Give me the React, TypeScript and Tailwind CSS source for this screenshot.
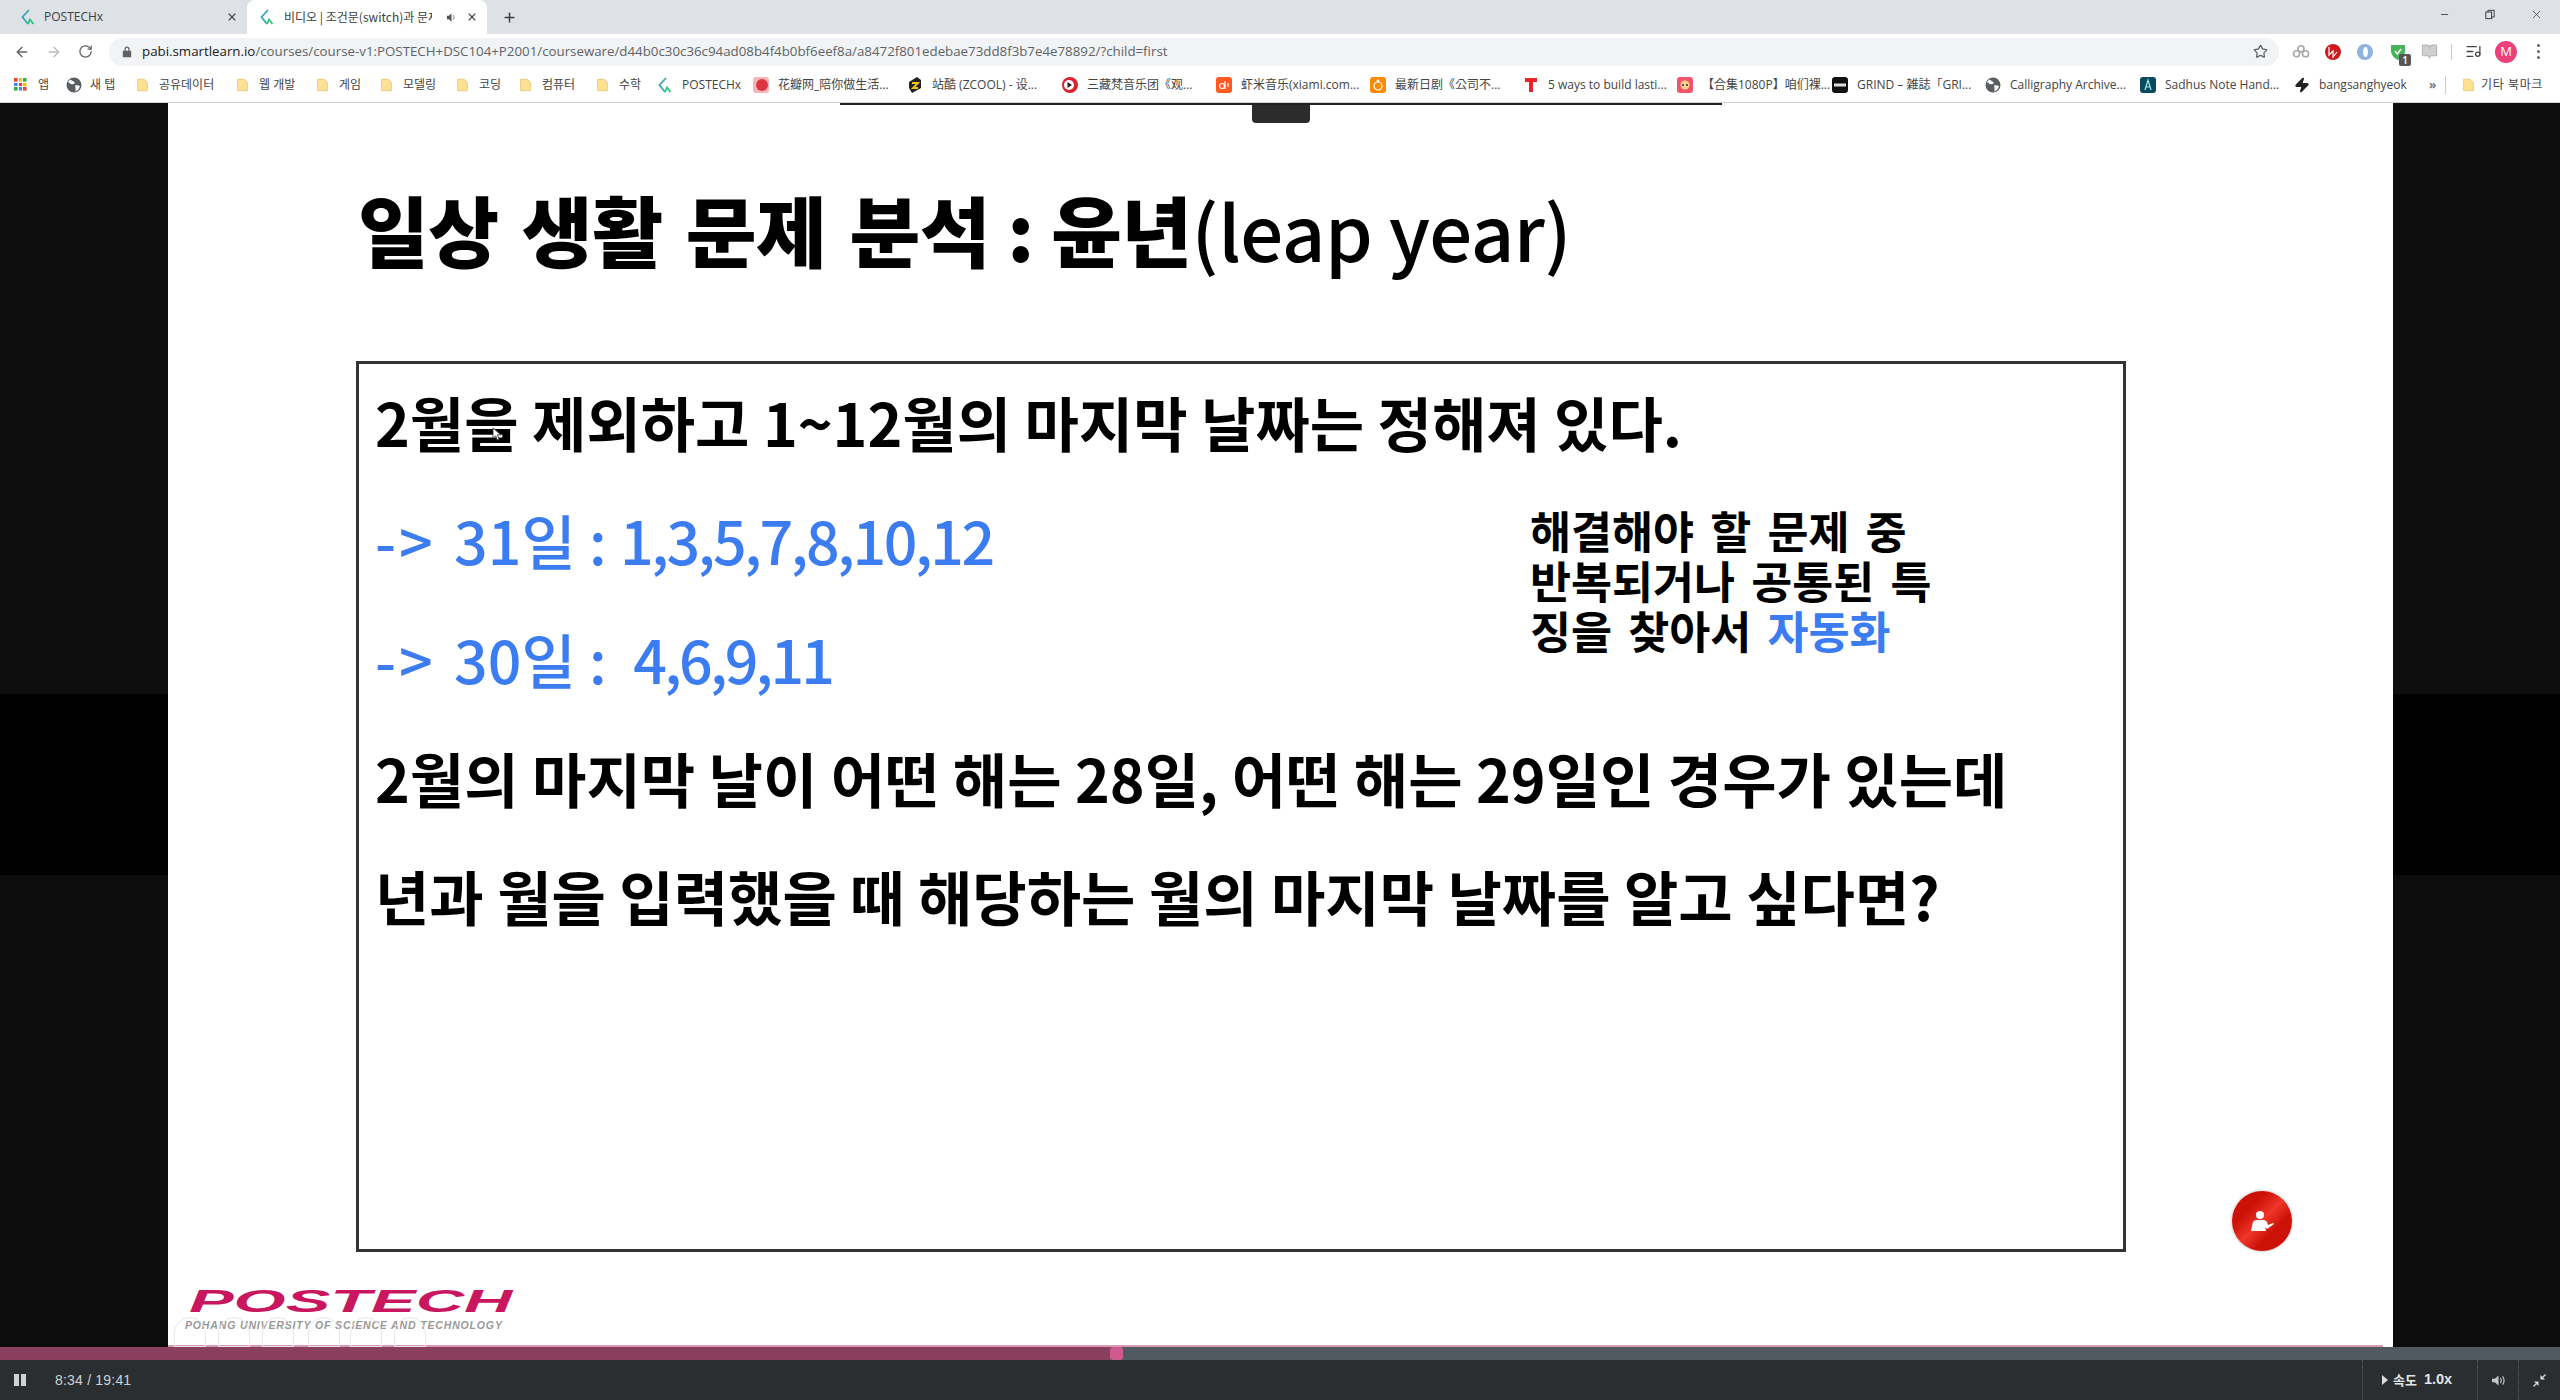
import React from "react";
import { ArrowLeft, ArrowRight, RotateCw, Star, Plus, X, Minus, ListMusic, BookOpen, Zap } from "lucide-react";

const ui = "font-['Open_Sans','Noto_Sans_CJK_KR',sans-serif]";
const slideFont = "font-['Noto_Sans_CJK_KR','Liberation_Sans',sans-serif]";

function Favicon({ className = "" }: { className?: string }) {
  return (
    <svg viewBox="0 0 16 16" className={"w-[16px] h-[16px] shrink-0 " + className} fill="none" strokeWidth="1.8">
      <path d="M9 1 L2.5 8 L8 15" stroke="#3aa6b5" />
      <path d="M8 15 L10 10.5 L13.5 15" stroke="#2bc47d" />
    </svg>
  );
}

function Folder() {
  return (
    <svg viewBox="0 0 12 16" className="w-[11px] h-[14px] shrink-0">
      <path d="M0.5 1.5 H8 L11.5 5 V14.5 H0.5 Z" fill="#fde293" stroke="#e6c66e" strokeWidth="1" />
    </svg>
  );
}

function Apps() {
  const c = ["#ea4335", "#fbbc05", "#34a853", "#4285f4", "#ea4335", "#fbbc05", "#34a853", "#4285f4", "#ea4335"];
  return (
    <div className="grid grid-cols-3 gap-[1px] w-[13px] h-[13px] shrink-0">
      {c.map((x, i) => (
        <svg key={i} viewBox="0 0 3 3" className="w-[3.6px] h-[3.6px]"><rect width="3" height="3" fill={x} /></svg>
      ))}
    </div>
  );
}

const DarkGlobe = () => (
  <svg viewBox="0 0 16 16" className="w-[16px] h-[16px] shrink-0">
    <circle cx="8" cy="8" r="7.5" fill="#5a5e63" />
    <path d="M4 2.5 Q8 4 9 6 Q7 8 5 7 Q3 6 2 5 Z M9 8.5 Q12 8 14 9 Q13 13 9.5 14.5 Q10 11 9 8.5 Z" fill="#fff" />
  </svg>
);

const Dot = ({ bg, children }: { bg: string; children?: React.ReactNode }) => (
  <svg viewBox="0 0 16 16" className="w-[16px] h-[16px] shrink-0">
    <rect width="16" height="16" rx="3" fill={bg} />
    {children}
  </svg>
);

const folders: [string, string][] = [
  ["공유데이터", "w-[100px]"],
  ["웹 개발", "w-[80px]"],
  ["게임", "w-[64px]"],
  ["모델링", "w-[76px]"],
  ["코딩", "w-[63px]"],
  ["컴퓨터", "w-[77px]"],
  ["수학", "w-[60px]"],
];

const sites: [React.ReactNode, string, string][] = [
  [<Favicon />, "POSTECHx", "w-[96px]"],
  [<Dot bg="#f4b6b6"><circle cx="9" cy="8" r="6" fill="#dc3545" /></Dot>, "花瓣网_陪你做生活...", "w-[154px]"],
  [<svg viewBox="0 0 16 16" className="w-[16px] h-[16px] shrink-0"><path d="M10 0 L14 3 V11 L5 16 L2 11 V5 Z" fill="#222" /><path d="M5 6 H11 L6 11 H11" stroke="#f5c518" strokeWidth="1.8" fill="none" /></svg>, "站酷 (ZCOOL) - 设...", "w-[155px]"],
  [<svg viewBox="0 0 16 16" className="w-[16px] h-[16px] shrink-0"><circle cx="8" cy="8" r="8" fill="#d9232d" /><circle cx="7" cy="8" r="5" fill="#fff" /><path d="M5.5 5 L10 8 L5.5 11 Z" fill="#222" /></svg>, "三藏梵音乐团《观...", "w-[154px]"],
  [<Dot bg="#ff5a1f"><circle cx="6" cy="9" r="2.5" fill="none" stroke="#fff" strokeWidth="1.2" /><path d="M9 4 V12 M12 6 V10" stroke="#fff" strokeWidth="1.2" /></Dot>, "虾米音乐(xiami.com...", "w-[154px]"],
  [<Dot bg="#ff8a00"><circle cx="8" cy="9" r="4" fill="none" stroke="#fff" strokeWidth="1.2" /><circle cx="8" cy="4" r="1.4" fill="#fff" /></Dot>, "最新日剧《公司不...", "w-[153px]"],
  [<svg viewBox="0 0 16 16" className="w-[16px] h-[16px] shrink-0"><path d="M2 1 H14 V5 H10 V15 H6 V5 H2 Z" fill="#e8262a" /></svg>, "5 ways to build lasti...", "w-[154px]"],
  [<Dot bg="#f0556b"><circle cx="8" cy="8" r="4.5" fill="#fbd38d" /><circle cx="6" cy="8" r="1" fill="#333" /><circle cx="10" cy="8" r="1" fill="#333" /></Dot>, "【合集1080P】咱们裸...", "w-[155px]"],
  [<Dot bg="#111"><rect x="2" y="6.5" width="12" height="3" fill="#ddd" /></Dot>, "GRIND – 雑誌「GRI...", "w-[153px]"],
  [<DarkGlobe />, "Calligraphy Archive...", "w-[155px]"],
  [<Dot bg="#0b4a5e"><path d="M5 13 L8 3 L11 13 M6.2 10 H9.8" stroke="#9ee" strokeWidth="1.2" fill="none" /></Dot>, "Sadhus Note Hand...", "w-[154px]"],
  [<Zap size={16} className="shrink-0" fill="#222" stroke="#222" />, "bangsanghyeok", "w-[135px]"],
];

function Chrome() {
  return (
    <div className={ui + " shrink-0"}>
      <div className="h-[34px] bg-[#dee1e6] flex items-end relative">
        <div className="w-[247px] h-[34px] flex items-center pl-[20px] text-[12px] text-[#3c4043]">
          <Favicon />
          <span className="ml-[8px] flex-1">POSTECHx</span>
          <X size={12} className="mr-[9px] text-[#444]" strokeWidth={2.2} />
        </div>
        <div className="w-[240px] h-[34px] bg-white rounded-t-[8px] flex items-center pl-[12px] text-[12px] text-[#3c4043]">
          <Favicon />
          <span className="ml-[9px] w-[148px] overflow-hidden whitespace-nowrap font-['Noto_Sans_CJK_KR','Open_Sans',sans-serif]">비디오 | 조건문(switch)과 문제</span>
          <svg viewBox="0 0 12 12" className="w-[11px] h-[11px] ml-[14px]"><path d="M1 4 H3 L6 1.5 V10.5 L3 8 H1 Z" fill="#555" /><path d="M8 3.5 Q10 6 8 8.5" stroke="#777" fill="none" /></svg>
          <X size={12} className="ml-[9px] text-[#444]" strokeWidth={2.2} />
        </div>
        <div className="h-[34px] flex items-center ml-[15px]"><Plus size={15} strokeWidth={2.4} className="text-[#3c4043]" /></div>
        <div className="ml-auto h-[28px] self-start flex items-center pr-[17px] gap-[35px] text-[#222]">
          <Minus size={11} strokeWidth={1.6} />
          <svg viewBox="0 0 12 12" className="w-[10px] h-[11px]" fill="none" stroke="#222" strokeWidth="1"><rect x="1" y="3" width="7" height="8" /><path d="M3.5 3 V1 H11 V9 H8" /></svg>
          <X size={13} strokeWidth={1.2} />
        </div>
      </div>

      <div className="h-[35px] bg-white flex items-center">
        <div className="w-[109px] flex items-center pl-[14px] gap-[16px] text-[#5f6368] shrink-0">
          <ArrowLeft size={16} strokeWidth={2} />
          <ArrowRight size={16} strokeWidth={2} className="text-[#bbb]" />
          <RotateCw size={15} strokeWidth={2} />
        </div>
        <div className="w-[2170px] h-[28px] bg-[#f1f3f4] rounded-full flex items-center pl-[13px] pr-[11px] shrink-0">
          <svg viewBox="0 0 12 14" className="w-[10px] h-[13px] text-[#5f6368]" fill="currentColor"><path d="M3 6 V4 a3 3 0 0 1 6 0 V6 H11 V14 H1 V6 Z M4.5 6 H7.5 V4 a1.5 1.5 0 0 0 -3 0 Z" fillRule="evenodd" /></svg>
          <div className="ml-[10px] text-[13.3px] whitespace-nowrap text-[#5f6368] flex-1">
            <span className="text-[#202124]">pabi.smartlearn.io</span>/courses/course-v1:POSTECH+DSC104+P2001/courseware/d44b0c30c36c94ad08b4f4b0bf6eef8a/a8472f801edebae73dd8f3b7e4e78892/?child=first
          </div>
          <Star size={15} className="text-[#5f6368]" strokeWidth={2} />
        </div>
        <div className="flex items-center relative flex-1 h-full">
          <svg viewBox="0 0 20 16" className="w-[18px] h-[15px] ml-[13px]" fill="none" stroke="#a8a8a8" strokeWidth="1.8"><circle cx="10" cy="5" r="3.4" /><circle cx="5" cy="10.5" r="3.4" /><circle cx="15" cy="10.5" r="3.4" /></svg>
          <svg viewBox="0 0 16 16" className="w-[16px] h-[16px] ml-[15px]"><circle cx="8" cy="8" r="8" fill="#cc1a1d" /><path d="M4 3 V11 L8 7 V13 L12 8" stroke="#fff" strokeWidth="1.2" fill="none" /></svg>
          <svg viewBox="0 0 16 16" className="w-[16px] h-[16px] ml-[16px]"><circle cx="8" cy="8" r="8" fill="#8fb3de" /><ellipse cx="8.5" cy="8" rx="2.4" ry="5" fill="#fff" /></svg>
          <div className="relative ml-[17px] w-[16px] h-[16px]">
            <svg viewBox="0 0 16 16" className="w-[16px] h-[16px]"><path d="M1 1 H15 V8 Q14 13 8 16 Q2 13 1 8 Z" fill="#48b35a" /><path d="M5 7 L7.5 10 L11 5" stroke="#fff" strokeWidth="1.4" fill="none" /></svg>
            <div className="absolute left-[9px] top-[10px] w-[12px] h-[12px] bg-[#555] rounded-[2px] text-white text-[10px] leading-[12px] text-center font-semibold">1</div>
          </div>
          <BookOpen size={17} className="ml-[15px] text-[#b5b5b5]" fill="#cfcfcf" strokeWidth={1.6} />
          <div className="w-px h-[16px] bg-[#ccc] ml-[13px]" />
          <ListMusic size={17} className="ml-[13px] text-[#444]" strokeWidth={1.8} />
          <div className="w-[22px] h-[22px] rounded-full bg-[#ec407a] text-white text-[13px] flex items-center justify-center ml-[13px]">M</div>
          <div className="flex flex-col gap-[3px] ml-[20px]">
            <div className="w-[3px] h-[3px] rounded-full bg-[#5f6368]" />
            <div className="w-[3px] h-[3px] rounded-full bg-[#5f6368]" />
            <div className="w-[3px] h-[3px] rounded-full bg-[#5f6368]" />
          </div>
        </div>
      </div>

      <div className="h-[34px] bg-white border-b border-[#cfd1d4] flex items-center pl-[14px] pb-[2px] text-[12px] text-[#444] whitespace-nowrap">
        <div className="w-[52px] flex items-center gap-[11px] shrink-0"><Apps /><span>앱</span></div>
        <div className="w-[71px] flex items-center gap-[8px] shrink-0"><DarkGlobe /><span>새 탭</span></div>
        {folders.map(([t, w]) => (
          <div key={t} className={w + " flex items-center gap-[11px] shrink-0"}><Folder /><span>{t}</span></div>
        ))}
        {sites.map(([ic, t, w]) => (
          <div key={t} className={w + " flex items-center gap-[9px] shrink-0 overflow-hidden"}>{ic}<span>{t}</span></div>
        ))}
        <span className="w-[16px] font-bold text-[#777] shrink-0">»</span>
        <div className="w-px h-[18px] bg-[#ccc] shrink-0" />
        <div className="flex items-center gap-[7px] ml-[17px] shrink-0"><Folder /><span className="tracking-[0.6px]">기타 북마크</span></div>
      </div>
    </div>
  );
}

function SideBar({ width }: { width: string }) {
  return (
    <div className={width + " flex flex-col shrink-0"}>
      <div className="h-[591px] bg-[#0e0e0e]" />
      <div className="h-[181px] bg-black" />
      <div className="flex-1 bg-[#0c0c0c]" />
    </div>
  );
}

function Slide() {
  const centers = ["left-[6px]", "left-[50px]", "left-[94px]", "left-[140px]", "left-[182px]", "left-[226px]"];
  return (
    <div className={"flex-1 bg-white relative overflow-hidden flex flex-col " + slideFont}>
      <div className="w-[882px] h-[2px] bg-[#222] mx-auto shrink-0" />
      <div className="w-[58px] h-[18px] bg-[#2c2c2c] rounded-b-[4px] mx-auto shrink-0" />

      <div className="mt-[66px] ml-[190px] h-[80px] leading-[80px] text-[77px] font-black text-black tracking-[-0.5px] [word-spacing:6px] whitespace-nowrap shrink-0">
        일상 생활 문제 분석<span className="[word-spacing:0px]"> : </span>윤년<span className="font-medium text-[76px] [word-spacing:0px]">(leap year)</span>
      </div>

      <div className="mt-[92px] ml-[188px] w-[1770px] h-[891px] border-[3px] border-[#333] pt-px pl-[16px] text-[59.1px] font-bold text-black whitespace-nowrap shrink-0">
        <div className="h-[118px] leading-[112px]">2월을 제외하고 1~12월의 마지막 날짜는 정해져 있다.</div>
        <div className="flex">
          <div className="w-[1155px] text-[#3b7cf0] font-medium">
            <div className="h-[119px] leading-[112px]"><span className="tracking-[3px] mr-[5px]">-&gt;</span> 31일 : <span className="tracking-[-2.4px]">1,3,5,7,8,10,12</span></div>
            <div className="h-[119px] leading-[112px]"><span className="tracking-[3px] mr-[5px]">-&gt;</span> 30일 :&nbsp; <span className="tracking-[-2.8px]">4,6,9,11</span></div>
          </div>
          <div className="mt-[22px] text-[44.6px] leading-[50px] font-bold [word-spacing:6px]">
            <div>해결해야 할 문제 중</div>
            <div>반복되거나 공통된 특</div>
            <div>징을 찾아서 <span className="text-[#3b7cf0]">자동화</span></div>
          </div>
        </div>
        <div className="h-[118px] leading-[112px]">2월의 마지막 날이 어떤 해는 28일, 어떤 해는 29일인 경우가 있는데</div>
        <div className="h-[118px] leading-[112px]">년과 월을 입력했을 때 해당하는 월의 마지막 날짜를 알고 싶다면?</div>
      </div>

      <div className="mt-[33px] ml-[21px] h-[32px] leading-[32px] text-[32px] font-['Liberation_Sans',sans-serif] font-bold italic text-[#c9175f] scale-x-[2.09] origin-left whitespace-nowrap shrink-0">POSTECH</div>
      <div className="mt-[1px] ml-[17px] text-[10.5px] leading-[14px] font-['Liberation_Sans',sans-serif] italic font-bold text-[#999] tracking-[0.85px] whitespace-nowrap shrink-0">POHANG UNIVERSITY OF SCIENCE AND TECHNOLOGY</div>

      <div className="absolute left-0 bottom-0 w-[2215px] h-[2px] bg-[#d89ab4]" />
      {centers.map((c) => (
        <div key={c} className={"absolute bottom-0 top-[1214px] w-[32px] rounded-t-full border border-[#e8e8e8] " + c} />
      ))}

      <svg viewBox="0 0 10 16" className="absolute left-[324px] top-[324px] w-[9px] h-[14px]"><path d="M1 1 V13 L4 10 L6 15 L8 14 L6 9 L10 9 Z" fill="#fff" stroke="#333" strokeWidth="1" /></svg>

      <div className="absolute left-[2064px] top-[1088px] w-[60px] h-[60px] rounded-full bg-[linear-gradient(135deg,#cc1206_30%,#f0352a_50%,#cc1206_68%)] flex items-center justify-center shadow-[0_0_3px_rgba(0,0,0,0.35)]">
        <svg viewBox="0 0 26 22" className="w-[26px] h-[22px]" fill="#fff"><circle cx="11" cy="5" r="4" /><path d="M2 21 L4 12 Q5 10 8 10 H14 Q17 10 18 12 L19 15 L24 13 L25 14 L18 19 L16 17 L17 21 Z" /></svg>
      </div>
    </div>
  );
}

function Player() {
  return (
    <div className="shrink-0 font-['Liberation_Sans','Noto_Sans_CJK_KR',sans-serif]">
      <div className="h-[13px] bg-[#505a60] relative">
        <div className="h-full w-[1110px] bg-[#8b3f5f]" />
        <div className="absolute left-[1110px] top-0 w-[13px] h-[13px] rounded-[3px] bg-[#ce5a8f]" />
      </div>
      <div className="h-[40px] bg-[#2a2e31] flex items-center text-[#cfd2d4]">
        <div className="ml-[14px] flex gap-[2px]">
          <div className="w-[5px] h-[12px] bg-[#cfd2d4]" />
          <div className="w-[5px] h-[12px] bg-[#cfd2d4]" />
        </div>
        <div className="ml-[29px] text-[14px] tracking-[0.2px]">8:34 / 19:41</div>
        <div className="ml-auto h-full w-[115px] border-l border-dotted border-[#5a5f63] flex items-center pl-[19px]">
          <svg viewBox="0 0 6 10" className="w-[6px] h-[10px]"><path d="M0 0 L6 5 L0 10 Z" fill="#d8dadc" /></svg>
          <span className="ml-[5px] text-[13px] font-semibold text-[#e4e5e6] font-['Noto_Sans_CJK_KR',sans-serif]">속도</span>
          <span className="ml-[7px] text-[14.5px] font-bold text-[#e4e5e6]">1.0x</span>
        </div>
        <div className="h-full w-[41px] border-l border-dotted border-[#5a5f63] flex items-center justify-center">
          <svg viewBox="0 0 16 14" className="w-[15px] h-[13px]" fill="none"><path d="M1 5 H4 L8 1.5 V12.5 L4 9 H1 Z" fill="#c4c7c9" /><path d="M10 4 Q12 7 10 10 M12.5 2.5 Q15.5 7 12.5 11.5" stroke="#c4c7c9" strokeWidth="1.2" /></svg>
        </div>
        <div className="h-full w-[42px] border-l border-dotted border-[#5a5f63] flex items-center justify-center">
          <svg viewBox="0 0 14 14" className="w-[13px] h-[13px]" fill="#d4d6d8"><path d="M8 1 V6 H13 L11 4 L14 1 L13 0 L10 3 Z M6 13 V8 H1 L3 10 L0 13 L1 14 L4 11 Z" /></svg>
        </div>
      </div>
    </div>
  );
}

export default function App() {
  return (
    <div className="w-[2560px] h-[1400px] flex flex-col overflow-hidden bg-black">
      <Chrome />
      <div className="flex-1 flex min-h-0">
        <SideBar width="w-[168px]" />
        <Slide />
        <SideBar width="w-[167px]" />
      </div>
      <Player />
    </div>
  );
}
